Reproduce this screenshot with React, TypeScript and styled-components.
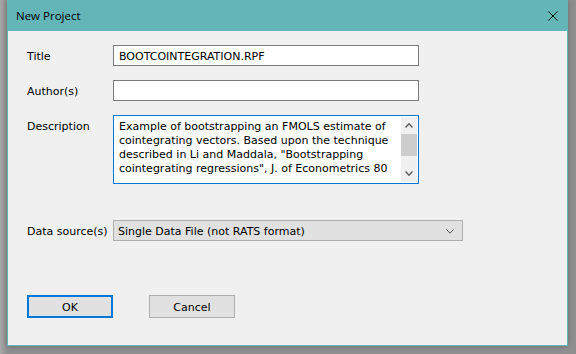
import React from "react";
import styled, { createGlobalStyle } from "styled-components";

const GlobalStyle = createGlobalStyle`
  html, body {
    margin: 0;
    padding: 0;
    background: #9a9a9a;
  }
  body {
    font-family: "DejaVu Sans", Verdana, sans-serif;
    font-size: 11px;
    color: #000;
  }
  * { box-sizing: border-box; }
`;

const TEAL = "#63b5b7";
const BLUE = "#0078d7";

const Screen = styled.div`
  width: 576px;
  height: 354px;
  padding: 0 8px 8px 7px;
  background: linear-gradient(90deg, #a9a9a9 0px, #8f8f8f 7px, #8f8f8f 100%);
  display: flex;
`;

const Window = styled.div`
  flex: 1;
  display: flex;
  flex-direction: column;
  background: #f0f0f0;
  border: 1px solid ${TEAL};
  border-top: none;
  box-shadow: 0 0 6px rgba(0, 0, 0, 0.25);
`;

const TitleBar = styled.div`
  height: 31px;
  margin: 0 -1px;
  padding: 0 9px 0 9px;
  background: ${TEAL};
  display: flex;
  align-items: center;
  justify-content: space-between;
`;

const Caption = styled.span`
  font-family: "Open Sans", "Noto Sans", sans-serif;
  font-size: 11.5px;
  color: #000;
  padding-bottom: 1px;
`;

const CloseIcon = styled.svg`
  display: block;
  width: 10px;
  height: 10px;
  margin-right: 1px;
`;

const Body = styled.div`
  padding: 14px 0 0 19px;
  display: flex;
  flex-direction: column;
`;

const Row = styled.div<{ $top: number }>`
  display: flex;
  align-items: center;
  margin-top: ${(p) => p.$top}px;
`;

const TopRow = styled(Row)`
  align-items: flex-start;
`;

const Label = styled.div<{ $pad?: number }>`
  width: 86px;
  flex: none;
  padding-top: ${(p) => p.$pad ?? 2}px;
  line-height: 14px;
`;

const TextBox = styled.div`
  width: 306px;
  height: 21px;
  background: #fff;
  border: 1px solid #7a7a7a;
  padding: 1px 5px 0;
  display: flex;
  align-items: center;
  white-space: nowrap;
  overflow: hidden;
`;

const Memo = styled.div`
  width: 306px;
  height: 69px;
  background: #fff;
  border: 1px solid ${BLUE};
  padding: 1px;
  display: flex;
`;

const MemoText = styled.div`
  flex: 1;
  padding: 3px 0 0 4px;
  line-height: 14px;
  overflow: hidden;
  white-space: nowrap;
`;

const ScrollBar = styled.div`
  width: 16px;
  flex: none;
  background: #f0f0f0;
  display: flex;
  flex-direction: column;
  align-items: stretch;
`;

const ScrollArrow = styled.div`
  height: 17px;
  display: flex;
  align-items: center;
  justify-content: center;
`;

const ScrollThumb = styled.div`
  height: 22px;
  background: #cdcdcd;
`;

const ScrollTrack = styled.div`
  flex: 1;
`;

const Select = styled.div`
  width: 350px;
  height: 21px;
  background: #e1e1e1;
  border: 1px solid #adadad;
  padding: 1px 8px 0 4px;
  display: flex;
  align-items: center;
  justify-content: space-between;
  white-space: nowrap;
`;

const Buttons = styled.div`
  display: flex;
  gap: 36px;
  margin-top: 54px;
`;

const Button = styled.div<{ $default?: boolean }>`
  width: 86px;
  height: 23px;
  background: #e1e1e1;
  border: ${(p) => (p.$default ? `2px solid ${BLUE}` : "1px solid #adadad")};
  padding-top: 1px;
  display: flex;
  align-items: center;
  justify-content: center;
`;

const Chevron = ({ up, color, w = 9, h = 5, sw = 1.4 }: { up?: boolean; color: string; w?: number; h?: number; sw?: number }) => (
  <svg width={w} height={h} viewBox={`0 0 ${w} ${h}`} style={{ display: "block" }}>
    <polyline
      points={
        up
          ? `0.5,${h - 0.5} ${w / 2},0.8 ${w - 0.5},${h - 0.5}`
          : `0.5,0.5 ${w / 2},${h - 0.8} ${w - 0.5},0.5`
      }
      fill="none"
      stroke={color}
      strokeWidth={sw}
    />
  </svg>
);

export default function App() {
  return (
    <>
      <GlobalStyle />
      <Screen>
        <Window>
          <TitleBar>
            <Caption>New Project</Caption>
            <CloseIcon viewBox="0 0 10 10">
              <path d="M0.5 0.5 L9.5 9.5 M9.5 0.5 L0.5 9.5" stroke="#000" strokeWidth="1" fill="none" />
            </CloseIcon>
          </TitleBar>
          <Body>
            <Row $top={0}>
              <Label>Title</Label>
              <TextBox>BOOTCOINTEGRATION.RPF</TextBox>
            </Row>
            <Row $top={14}>
              <Label>Author(s)</Label>
              <TextBox />
            </Row>
            <TopRow $top={14}>
              <Label $pad={5}>Description</Label>
              <Memo>
                <MemoText>
                  Example of bootstrapping an FMOLS estimate of
                  <br />
                  cointegrating vectors. Based upon the technique
                  <br />
                  described in Li and Maddala, "Bootstrapping
                  <br />
                  cointegrating regressions", J. of Econometrics 80
                </MemoText>
                <ScrollBar>
                  <ScrollArrow>
                    <Chevron up color="#606060" w={8} h={5} sw={1.5} />
                  </ScrollArrow>
                  <ScrollThumb />
                  <ScrollTrack />
                  <ScrollArrow>
                    <Chevron color="#606060" w={8} h={5} sw={1.5} />
                  </ScrollArrow>
                </ScrollBar>
              </Memo>
            </TopRow>
            <Row $top={36}>
              <Label>Data source(s)</Label>
              <Select>
                <span>Single Data File (not RATS format)</span>
                <Chevron color="#555" w={8} h={5} sw={1} />
              </Select>
            </Row>
            <Buttons>
              <Button $default>OK</Button>
              <Button>Cancel</Button>
            </Buttons>
          </Body>
        </Window>
      </Screen>
    </>
  );
}
